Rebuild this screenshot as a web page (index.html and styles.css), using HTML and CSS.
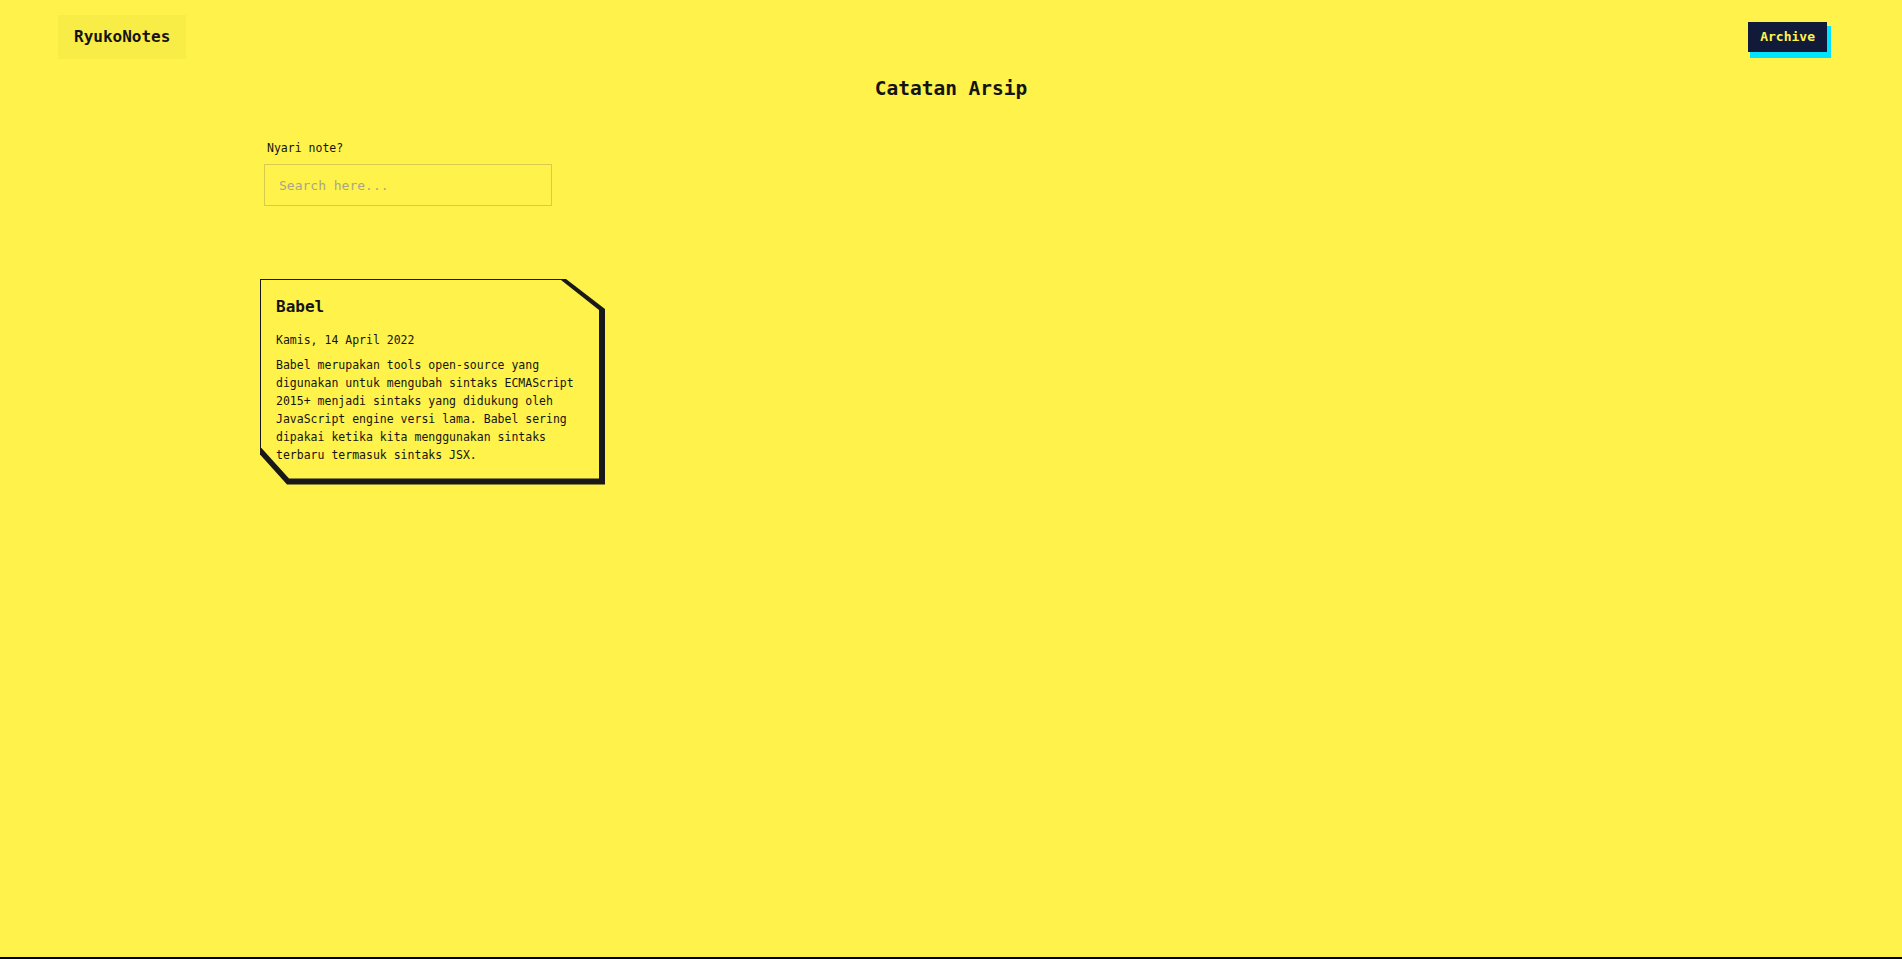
FILE: index.html
```html
<!DOCTYPE html>
<html lang="id">
<head>
<meta charset="utf-8">
<title>RyukoNotes</title>
<link rel="stylesheet" href="styles.css">
</head>
<body>
<div class="page">
  <header class="header">
    <a class="logo" href="#">RyukoNotes</a>
    <a class="archive-btn" href="#">Archive</a>
  </header>
  <main class="main">
    <h1 class="title">Catatan Arsip</h1>
    <div class="search">
      <label class="search-label" for="q">Nyari note?</label>
      <input class="search-input" id="q" type="text" placeholder="Search here...">
    </div>
    <div class="notes">
      <article class="card">
        <div class="card-inner">
          <h2 class="card-title">Babel</h2>
          <p class="card-date">Kamis, 14 April 2022</p>
          <p class="card-body">Babel merupakan tools open-source yang digunakan untuk mengubah sintaks ECMAScript 2015+ menjadi sintaks yang didukung oleh JavaScript engine versi lama. Babel sering dipakai ketika kita menggunakan sintaks terbaru termasuk sintaks JSX.</p>
        </div>
      </article>
    </div>
  </main>
  <footer class="footer"></footer>
</div>
</body>
</html>
```

FILE: styles.css
```css
* { box-sizing: border-box; }

html, body {
  margin: 0;
  padding: 0;
  background: #fff24a;
  color: #141414;
  font-family: "DejaVu Sans Mono", "Liberation Mono", monospace;
}

.page {
  min-height: 100vh;
  display: flex;
  flex-direction: column;
}

.header {
  display: flex;
  justify-content: space-between;
  align-items: center;
  padding: 15px 75px 0 58px;
}

.logo {
  display: flex;
  align-items: center;
  height: 44px;
  padding: 0 16px 2px;
  background: #f8ec47;
  color: #141414;
  font-weight: bold;
  font-size: 16px;
  text-decoration: none;
}

.archive-btn {
  display: flex;
  align-items: center;
  height: 30px;
  padding: 0 12px 1px;
  background: #121a3a;
  color: #fff24a;
  font-weight: bold;
  font-size: 13px;
  text-decoration: none;
  box-shadow: 3px 5px 0 1px #00e4ff;
}

.main {
  flex: 1;
  padding: 0 260px;
}

.title {
  margin: 18px 0 0;
  text-align: center;
  font-size: 19.5px;
  line-height: 24px;
  font-weight: bold;
}

.search {
  display: flex;
  flex-direction: column;
  align-items: flex-start;
  margin: 40px 0 0 4px;
}

.search-label {
  font-size: 11.5px;
  line-height: 14px;
  padding-left: 3px;
  margin-bottom: 9px;
}

.search-input {
  width: 288px;
  height: 42px;
  padding: 0 14px;
  border: 1px solid #d8ca4c;
  background: transparent;
  font-family: "DejaVu Sans Mono", "Liberation Mono", monospace;
  font-size: 13px;
  color: #141414;
  outline: none;
}

.search-input::placeholder {
  color: #aaa58a;
}

.notes {
  display: flex;
  margin-top: 73px;
}

.card {
  width: 345px;
  padding: 1px 6px 6px 1px;
  background: #191919;
  clip-path: polygon(0 0, calc(100% - 39px) 0, 100% 30px, 100% 100%, 27px 100%, 0 calc(100% - 30px));
}

.card-inner {
  background: #fff24a;
  padding: 17px 16px 14px 15px;
  clip-path: polygon(0 0, calc(100% - 38px) 0, 100% 30px, 100% 100%, 28px 100%, 0 calc(100% - 31px));
}

.card-title {
  margin: 0;
  font-size: 16px;
  line-height: 20px;
  font-weight: bold;
}

.card-date {
  margin: 14.5px 0 0;
  font-size: 11.5px;
  line-height: 17.9px;
}

.card-body {
  margin: 7.7px 0 0;
  font-size: 11.5px;
  line-height: 17.9px;
}

.footer {
  height: 2px;
  background: #000;
}
```
